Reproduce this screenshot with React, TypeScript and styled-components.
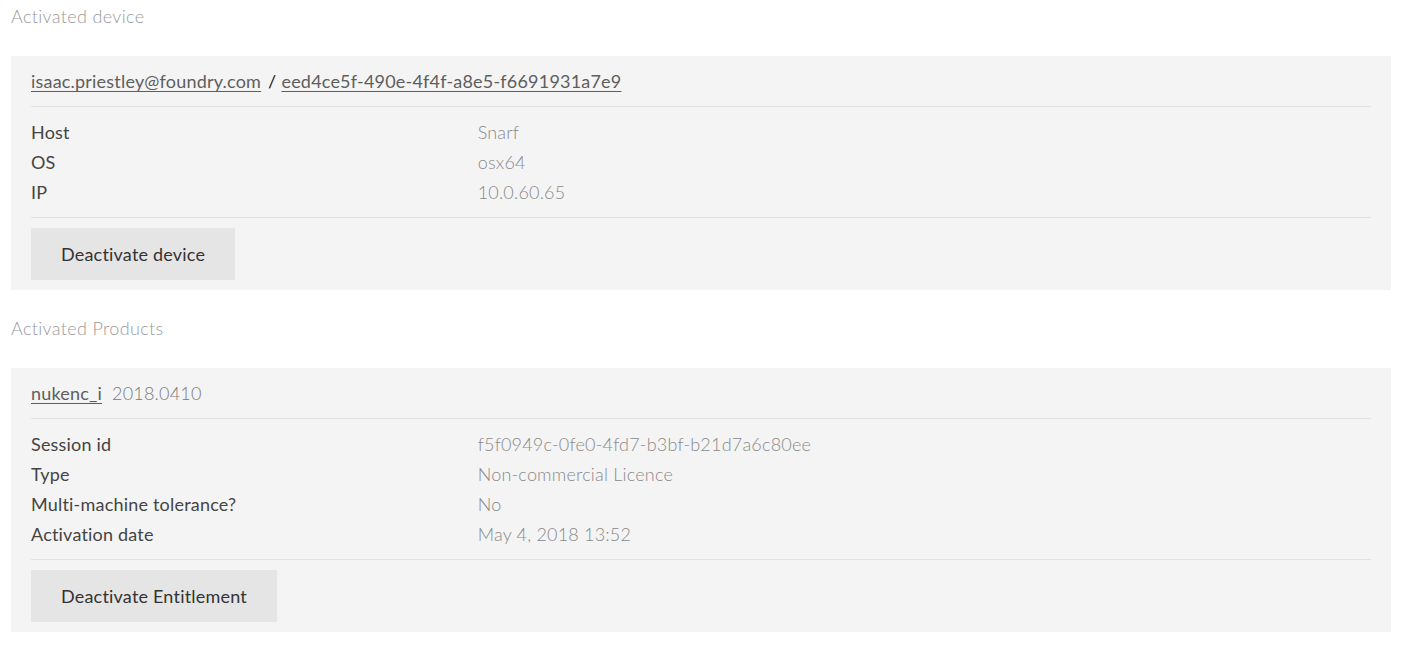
import React from "react";
import styled, { createGlobalStyle } from "styled-components";

const GlobalStyle = createGlobalStyle`
  body {
    margin: 0;
    background: #fff;
    font-family: Lato, "Open Sans", sans-serif;
    -webkit-font-smoothing: antialiased;
  }
  a {
    color: inherit;
  }
`;

type Field = { label: string; value: string };

const deviceFields: Field[] = [
  { label: "Host", value: "Snarf" },
  { label: "OS", value: "osx64" },
  { label: "IP", value: "10.0.60.65" },
];

const productFields: Field[] = [
  { label: "Session id", value: "f5f0949c-0fe0-4fd7-b3bf-b21d7a6c80ee" },
  { label: "Type", value: "Non-commercial Licence" },
  { label: "Multi-machine tolerance?", value: "No" },
  { label: "Activation date", value: "May 4, 2018 13:52" },
];

function FieldList({ fields }: { fields: Field[] }) {
  return (
    <Fields>
      {fields.map((f) => (
        <React.Fragment key={f.label}>
          <Label>{f.label}</Label>
          <Value>{f.value}</Value>
        </React.Fragment>
      ))}
    </Fields>
  );
}

function App() {
  return (
    <>
      <GlobalStyle />
      <Page>
        <Section>
          <SectionTitle>Activated device</SectionTitle>
          <Panel>
            <PanelHeader>
              <HeaderLink href="#">isaac.priestley@foundry.com</HeaderLink>
              <Slash>/</Slash>
              <HeaderLink href="#">eed4ce5f-490e-4f4f-a8e5-f6691931a7e9</HeaderLink>
            </PanelHeader>
            <Divider />
            <FieldList fields={deviceFields} />
            <Divider />
            <Button>Deactivate device</Button>
          </Panel>
        </Section>
        <Section>
          <SectionTitle>Activated Products</SectionTitle>
          <Panel>
            <PanelHeader>
              <HeaderLink href="#">nukenc_i</HeaderLink>
              <Version>2018.0410</Version>
            </PanelHeader>
            <Divider />
            <FieldList fields={productFields} />
            <Divider />
            <Button>Deactivate Entitlement</Button>
          </Panel>
        </Section>
      </Page>
    </>
  );
}

export default App;

const Page = styled.div`
  padding: 0 17px 0 11px;
  display: flex;
  flex-direction: column;
  gap: 22px;
`;

const Section = styled.section`
  display: flex;
  flex-direction: column;
  gap: 22px;
`;

const SectionTitle = styled.div`
  line-height: 33px;
  margin-bottom: 1px;
  font-size: 18px;
  letter-spacing: 0.35px;
  font-weight: 300;
  color: #9a9a9a;
`;

const Panel = styled.div`
  background: #f4f4f4;
  padding: 10px 20px;
  display: flex;
  flex-direction: column;
  align-items: flex-start;
`;

const PanelHeader = styled.div`
  line-height: 30px;
  font-size: 18px;
  letter-spacing: 0.2px;
  display: flex;
  align-items: baseline;
`;

const HeaderLink = styled.a`
  color: #5e5e5e;
  text-decoration: underline;
  text-underline-offset: 3px;
  text-decoration-thickness: 1px;
`;

const Slash = styled.span`
  color: #222;
  margin: 0 5px 0 7px;
`;

const Version = styled.span`
  color: #7a7a7a;
  font-weight: 300;
  margin-left: 10px;
`;

const Divider = styled.hr`
  align-self: stretch;
  border: 0;
  border-top: 1px solid #e1e1e1;
  margin: 10px 0;
`;

const Fields = styled.div`
  align-self: stretch;
  display: grid;
  grid-template-columns: 1fr 2fr;
  font-size: 18px;
  letter-spacing: 0.2px;
  line-height: 30px;
`;

const Label = styled.div`
  color: #444;
`;

const Value = styled.div`
  color: #8a8a8a;
  font-weight: 300;
`;

const Button = styled.button`
  background: #e5e5e5;
  border: 0;
  height: 52px;
  padding: 0 30px;
  font-family: inherit;
  font-size: 18px;
  letter-spacing: 0.2px;
  color: #333;
  cursor: pointer;
`;
